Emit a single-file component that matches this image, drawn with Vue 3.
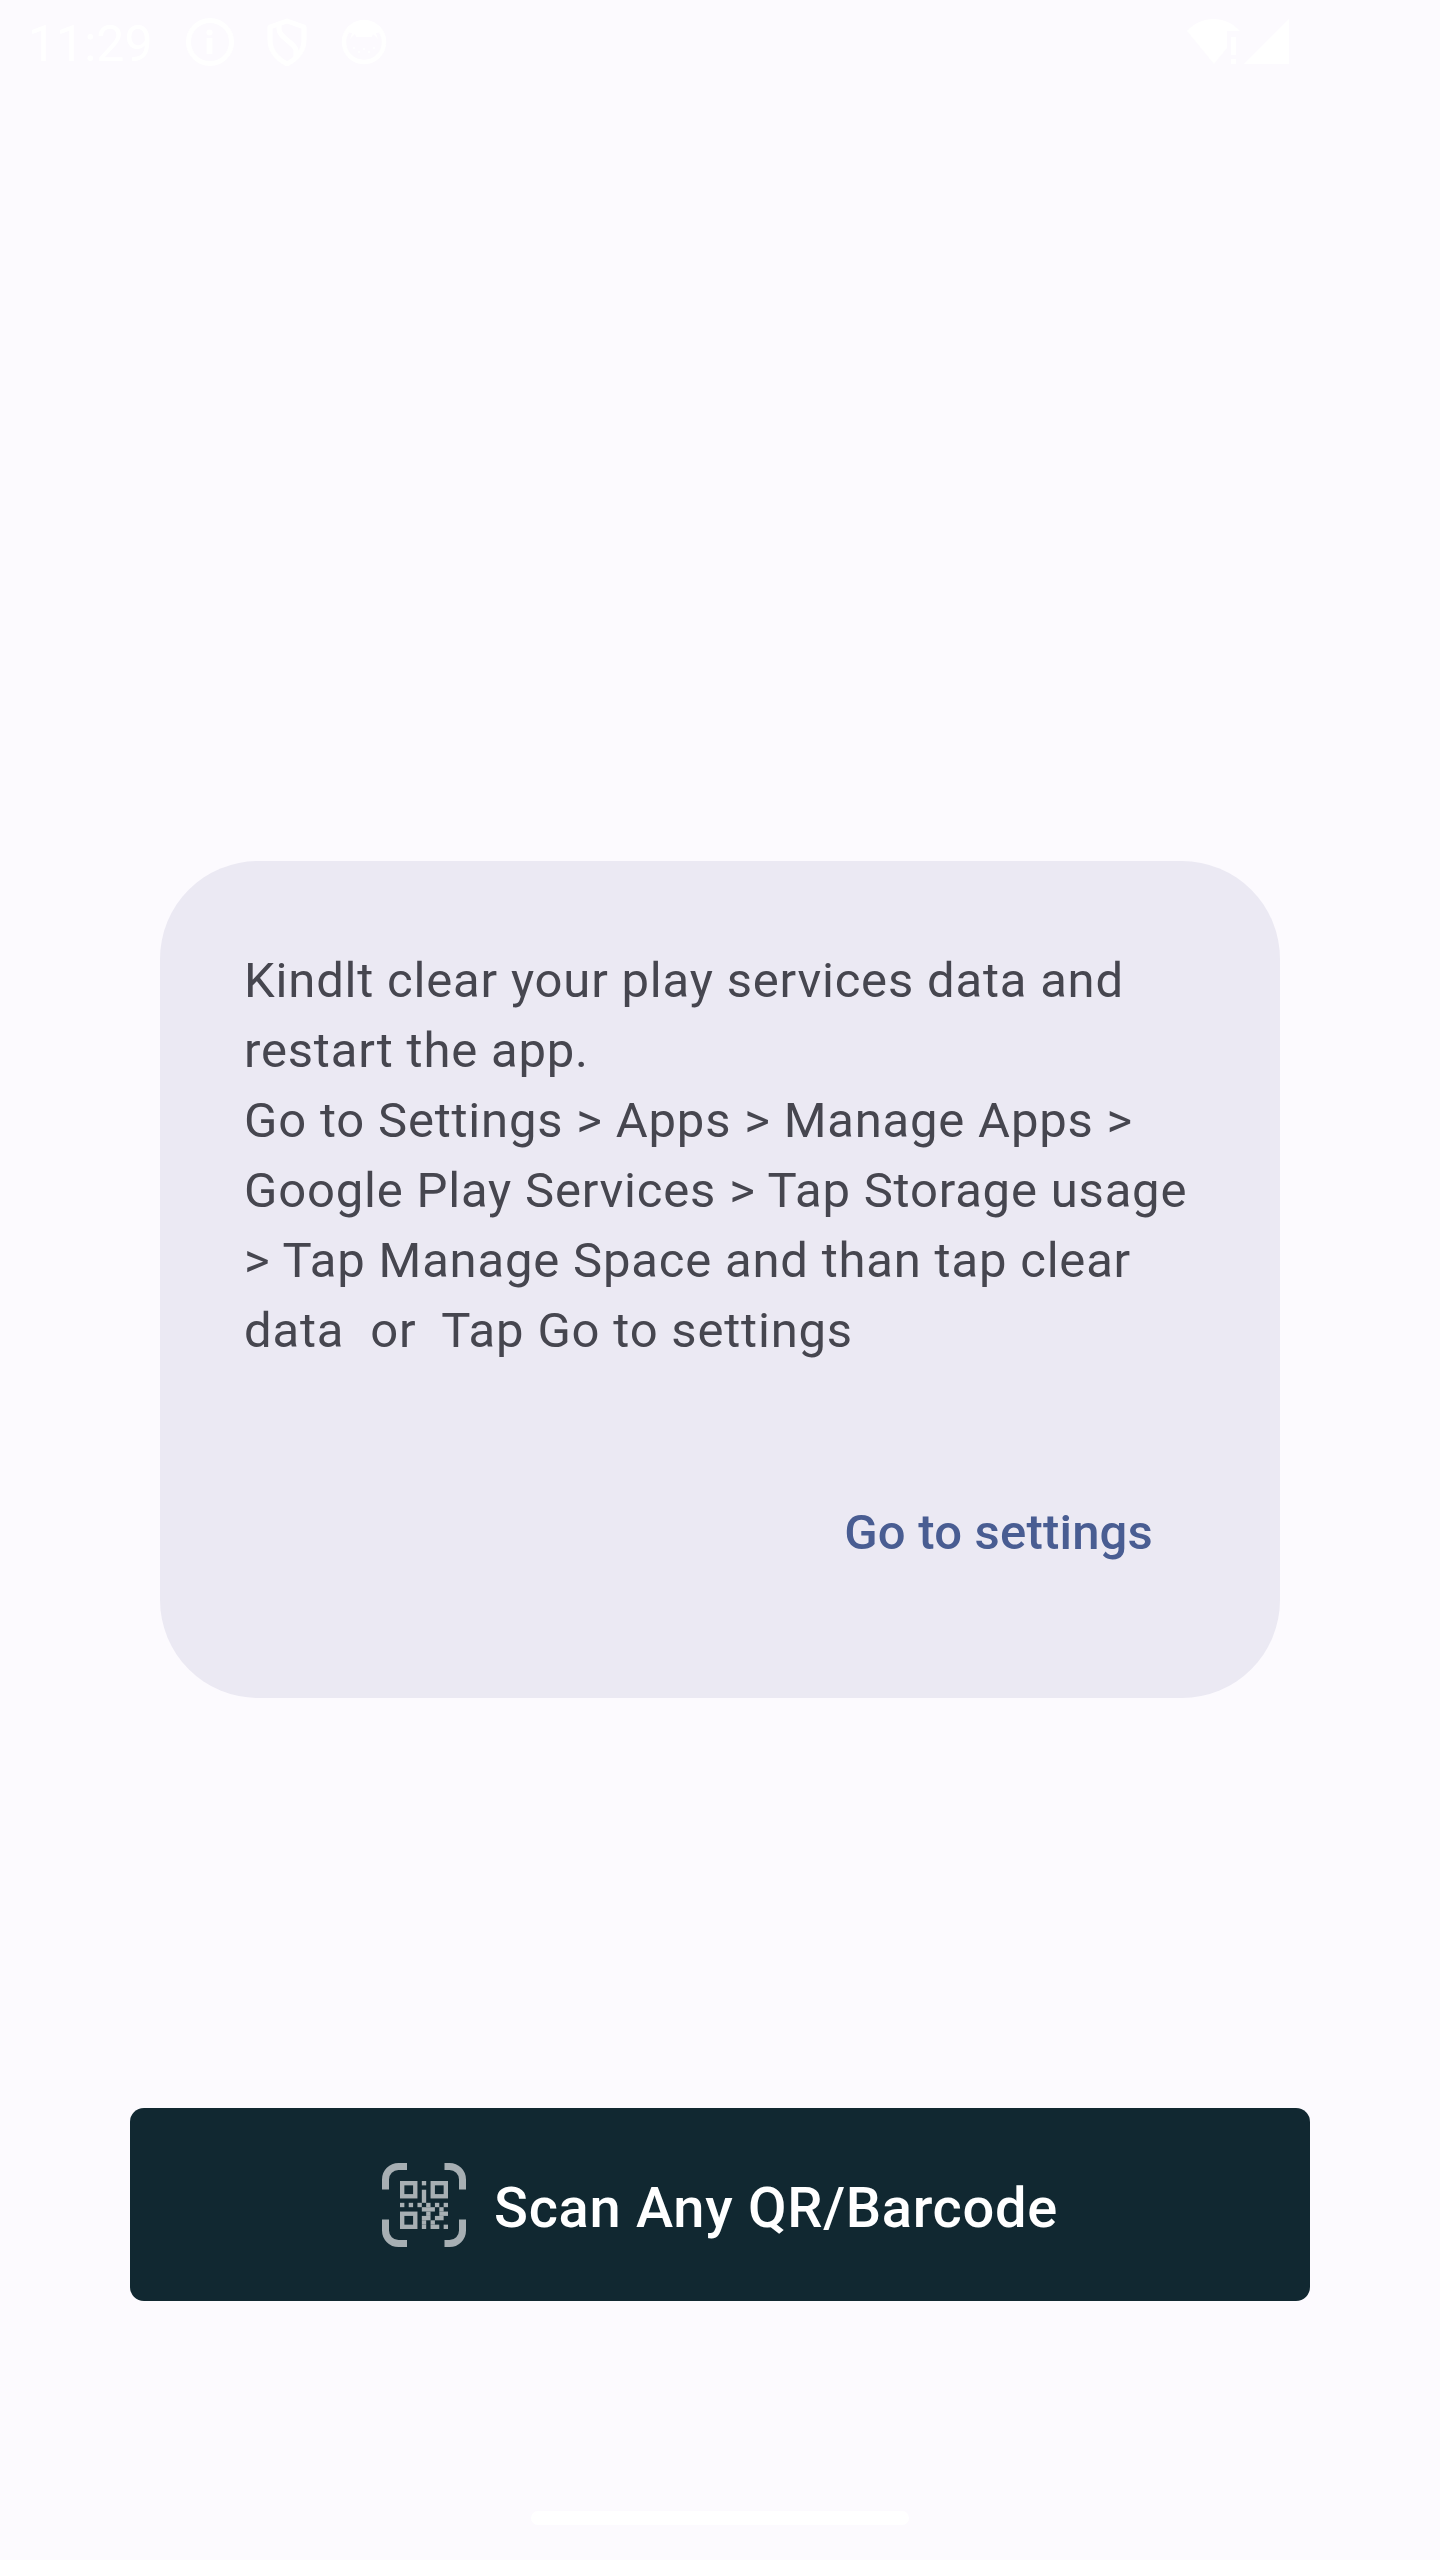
<script setup>
// Filled modules of the QR glyph: [column, row, width, height] in module units
const modules = [
  [5, 0, 1, 1], [5, 2, 1, 3],
  [0, 5, 1, 1], [2, 5, 1, 1], [4, 5, 1, 1], [6, 5, 1, 1], [8, 5, 1, 1], [10, 5, 1, 1],
  [5, 6, 3, 1], [9, 6, 1, 1],
  [6, 7, 1, 1], [9, 7, 2, 1],
  [5, 8, 2, 1], [8, 8, 2, 1],
  [5, 9, 1, 1], [7, 9, 1, 1],
  [5, 10, 1, 1], [7, 10, 2, 1], [10, 10, 1, 1],
]
const finders = [[0, 0], [7, 0], [0, 7]]

const message = [
  'Kindlt clear your play services data and',
  'restart the app.',
  'Go to Settings > Apps > Manage Apps >',
  'Google Play Services > Tap Storage usage',
  '> Tap Manage Space and than tap clear',
  'data  or  Tap Go to settings',
].join('\n')
</script>

<template>
  <div class="screen">
    <header class="status">
      <span class="clock">11:29</span>
      <svg class="info" width="48" height="48" viewBox="0 0 48 48">
        <circle cx="24" cy="24" r="21.5" fill="none" stroke="#fff" stroke-width="5" />
        <circle cx="23.5" cy="14.5" r="3" fill="#fff" />
        <path d="M20.500 20h6v16h-6z" fill="#fff" />
      </svg>
      <svg class="shield" width="40" height="48" viewBox="0 0 40 48">
        <path d="M20 3 3 9v13c0 10 6 18 17 24 11-6 17-14 17-24V9z" fill="none" stroke="#fff" stroke-width="5" stroke-linejoin="round" />
        <path d="M12 7v4c0 9 17 14 17 22v6" fill="none" stroke="#fff" stroke-width="5" />
      </svg>
      <svg class="face" width="46" height="46" viewBox="0 0 46 46">
        <circle cx="23" cy="23" r="20" fill="none" stroke="#fff" stroke-width="4.500" />
        <path d="M5 13C13-2 33-2 41 13L35 14l2 6-5-5-1 3H15l-1-3-5 5 2-6z" fill="#fff" />
        <g fill="#fff">
          <circle cx="13" cy="29" r="1" /><circle cx="18" cy="33" r="1" />
          <circle cx="23" cy="30" r="1" /><circle cx="28" cy="33" r="1" />
          <circle cx="33" cy="29" r="1" />
        </g>
      </svg>
      <div class="signals">
        <svg width="104" height="46" viewBox="0 0 104 46">
          <path d="M0 12C14-4 39-4 53 12H40V29L27 45Z" fill="#fff" />
          <path d="M44 18h5v18h-5zM44 40h5v5h-5z" fill="#fff" />
          <path d="M102 0V45H57z" fill="#fff" />
        </svg>
      </div>
    </header>

    <main class="content">
      <section class="card">
        <p class="message">{{ message }}</p>
        <button class="link">Go to settings</button>
      </section>
      <button class="scan">
        <svg width="84" height="84" viewBox="0 0 84 84">
          <path
            d="M3.500 26.500V16.500A13 13 0 0 1 16.500 3.500H25M62.500 3.500H67.500A13 13 0 0 1 80.500 16.500V26.500M80.500 56.500V67.500A13 13 0 0 1 67.500 80.500H62.500M25 80.500H16.500A13 13 0 0 1 3.500 67.500V56.500"
            fill="none" stroke="#a7afb3" stroke-width="7"
          />
          <g transform="translate(18 18) scale(4.364)">
            <rect
              v-for="f in finders" :key="f.join()" :x="f[0] + 0.5" :y="f[1] + 0.5"
              width="3" height="3" fill="none" stroke="#a7afb3"
            />
            <rect
              v-for="m in modules" :key="m.join()" :x="m[0]" :y="m[1]"
              :width="m[2]" :height="m[3]" fill="#a7afb3"
            />
          </g>
        </svg>
        <span class="scan-label">Scan Any QR/Barcode</span>
      </button>
    </main>
    <div class="handle"></div>
  </div>
</template>

<style>
body {
  background: #fcfafe;
}
</style>

<style scoped>
.screen {
  display: flex;
  flex-direction: column;
  align-items: center;
  height: 2560px;
  background: #fcfafe;
  font-family: Roboto, sans-serif;
}
.status {
  display: flex;
  align-items: flex-start;
  box-sizing: border-box;
  width: 100%;
  height: 84px;
  padding: 18px 149px 0 28px;
}
.clock {
  width: 158px;
  margin-top: -3px;
  font-size: 50px;
  line-height: 58px;
  color: #fff;
}
.shield {
  margin-left: 33px;
}
.face {
  margin: 1px 0 0 34px;
}
.signals {
  margin: 1px 0 0 auto;
}
.content {
  display: flex;
  flex-direction: column;
  align-items: center;
}
.card {
  display: flex;
  flex-direction: column;
  align-items: flex-end;
  box-sizing: border-box;
  width: 1120px;
  height: 837px;
  margin-top: 777px;
  padding: 85px 84px 0;
  border-radius: 98px;
  background: #ebe9f3;
}
.message {
  align-self: stretch;
  margin: 0;
  font-size: 49px;
  line-height: 70px;
  letter-spacing: 0.81px;
  white-space: pre;
  color: #46464f;
}
button {
  border: 0;
  font-family: inherit;
  font-weight: 500;
}
.link {
  margin: 132px 43px 0 0;
  padding: 0;
  background: none;
  font-size: 49px;
  line-height: 70px;
  letter-spacing: 0.2px;
  white-space: nowrap;
  color: #495d92;
}
.scan {
  display: flex;
  align-items: center;
  justify-content: center;
  gap: 28px;
  width: 1180px;
  height: 193px;
  margin-top: 410px;
  padding: 0;
  border-radius: 14px;
  background: #112831;
  color: #fff;
  font-size: 56px;
  letter-spacing: 0.7px;
}
.scan-label {
  padding-top: 6px;
}
.handle {
  width: 378px;
  height: 14px;
  margin-top: 210px;
  border-radius: 7px;
  background: #fff;
}
</style>
